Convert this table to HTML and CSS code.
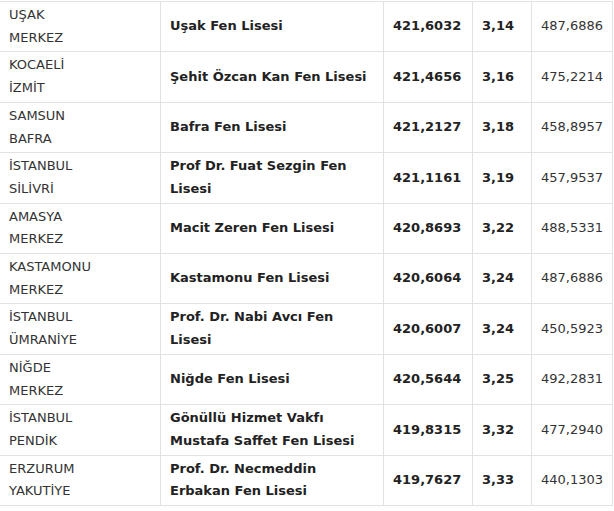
FILE: index.html
```html
<!DOCTYPE html>
<html lang="tr">
<head>
<meta charset="utf-8">
<link rel="stylesheet" href="styles.css">
</head>
<body>
<table class="results">
  <colgroup>
    <col class="c-city"><col class="c-school"><col class="c-score"><col class="c-pct"><col class="c-base">
  </colgroup>
  <tbody>
    <tr><td>UŞAK<br>MERKEZ</td><td class="b">Uşak Fen Lisesi</td><td class="b">421,6032</td><td class="b">3,14</td><td>487,6886</td></tr>
    <tr><td>KOCAELİ<br>İZMİT</td><td class="b">Şehit Özcan Kan Fen Lisesi</td><td class="b">421,4656</td><td class="b">3,16</td><td>475,2214</td></tr>
    <tr><td>SAMSUN<br>BAFRA</td><td class="b">Bafra Fen Lisesi</td><td class="b">421,2127</td><td class="b">3,18</td><td>458,8957</td></tr>
    <tr><td>İSTANBUL<br>SİLİVRİ</td><td class="b">Prof Dr. Fuat Sezgin Fen Lisesi</td><td class="b">421,1161</td><td class="b">3,19</td><td>457,9537</td></tr>
    <tr><td>AMASYA<br>MERKEZ</td><td class="b">Macit Zeren Fen Lisesi</td><td class="b">420,8693</td><td class="b">3,22</td><td>488,5331</td></tr>
    <tr><td>KASTAMONU<br>MERKEZ</td><td class="b">Kastamonu Fen Lisesi</td><td class="b">420,6064</td><td class="b">3,24</td><td>487,6886</td></tr>
    <tr><td>İSTANBUL<br>ÜMRANİYE</td><td class="b">Prof. Dr. Nabi Avcı Fen Lisesi</td><td class="b">420,6007</td><td class="b">3,24</td><td>450,5923</td></tr>
    <tr><td>NİĞDE<br>MERKEZ</td><td class="b">Niğde Fen Lisesi</td><td class="b">420,5644</td><td class="b">3,25</td><td>492,2831</td></tr>
    <tr><td>İSTANBUL<br>PENDİK</td><td class="b">Gönüllü Hizmet Vakfı Mustafa Saffet Fen Lisesi</td><td class="b">419,8315</td><td class="b">3,32</td><td>477,2940</td></tr>
    <tr><td>ERZURUM<br>YAKUTİYE</td><td class="b">Prof. Dr. Necmeddin Erbakan Fen Lisesi</td><td class="b">419,7627</td><td class="b">3,33</td><td>440,1303</td></tr>
  </tbody>
</table>
</body>
</html>
```
FILE: styles.css
```css
html, body {
  margin: 0;
  padding: 0;
  background: #fff;
}
body {
  font-family: "DejaVu Sans", Verdana, sans-serif;
  font-size: 13px;
  color: #333;
}
.results {
  border-collapse: collapse;
  table-layout: fixed;
  width: 613px;
  margin-top: 1px;
  margin-left: -1px;
}
.c-city { width: 161px; }
.c-school { width: 223px; }
.c-score { width: 89px; }
.c-pct { width: 59px; }
.c-base { width: 81px; }
.results td {
  border: 1px solid #e2e2e2;
  padding: 2px 8px 2px 9px;
  line-height: 22.7px;
  vertical-align: middle;
  text-align: left;
}
.results td.b {
  font-weight: bold;
  color: #222;
}
```
